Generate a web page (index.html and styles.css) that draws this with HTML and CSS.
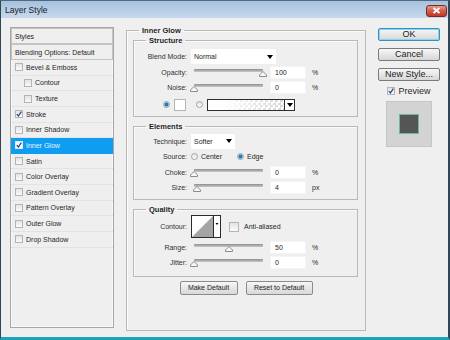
FILE: index.html
```html
<!doctype html>
<html lang="en">
  <head>
    <meta charset="UTF-8" />
    <meta name="viewport" content="width=device-width, initial-scale=1.0" />
    <title>Layer Style</title>
    <link rel="stylesheet" href="styles.css">
  </head>
  <body>
    <div class="window">
      <div class="titlebar">
        <span>Layer Style</span>
        <button type="button" class="close">
          <svg width="9" height="7" viewBox="0 0 9 7"><path d="M1.5 1 L7.5 6 M7.5 1 L1.5 6" stroke="#fff" stroke-width="1.8" /></svg>
        </button>
      </div>

      <div class="dialog">
        <!-- styles list -->
        <div class="styles">
          <div class="head">Styles</div>
          <div class="head">Blending Options: Default</div>
          <div class="item"><span class="cb"></span>Bevel &amp; Emboss</div>
          <div class="item indent"><span class="cb"></span>Contour</div>
          <div class="item indent"><span class="cb"></span>Texture</div>
          <div class="item"><span class="cb"><svg width="6" height="6" viewBox="0 0 6 6"><path d="M0.8 3.2 L2.4 5 L5.3 0.6" fill="none" stroke="#23427e" stroke-width="1.2" /></svg></span>Stroke</div>
          <div class="item"><span class="cb"></span>Inner Shadow</div>
          <div class="item selected"><span class="cb"><svg width="6" height="6" viewBox="0 0 6 6"><path d="M0.8 3.2 L2.4 5 L5.3 0.6" fill="none" stroke="#23427e" stroke-width="1.2" /></svg></span>Inner Glow</div>
          <div class="item"><span class="cb"></span>Satin</div>
          <div class="item"><span class="cb"></span>Color Overlay</div>
          <div class="item"><span class="cb"></span>Gradient Overlay</div>
          <div class="item"><span class="cb"></span>Pattern Overlay</div>
          <div class="item"><span class="cb"></span>Outer Glow</div>
          <div class="item"><span class="cb"></span>Drop Shadow</div>
        </div>

        <!-- settings -->
        <div class="main">
          <fieldset class="group">
            <legend>Inner Glow</legend>

            <fieldset class="sub structure">
              <legend>Structure</legend>
              <div class="row">
                <span class="lbl">Blend Mode:</span>
                <div class="select wide">Normal<span class="tri"></span></div>
              </div>
              <div class="row">
                <span class="lbl">Opacity:</span>
                <div class="slider"><div class="track"></div><svg class="thumb" style="left: 68px" width="8" height="6" viewBox="0 0 8 6"><path d="M0.5 5.5 L0.5 4 L4 0.5 L7.5 4 L7.5 5.5 Z" fill="#f7f7f7" stroke="#8c8c8c" /></svg></div>
                <div class="field">100</div><span class="unit">%</span>
              </div>
              <div class="row">
                <span class="lbl">Noise:</span>
                <div class="slider"><div class="track"></div><svg class="thumb" style="left: -1px" width="8" height="6" viewBox="0 0 8 6"><path d="M0.5 5.5 L0.5 4 L4 0.5 L7.5 4 L7.5 5.5 Z" fill="#f7f7f7" stroke="#8c8c8c" /></svg></div>
                <div class="field">0</div><span class="unit">%</span>
              </div>
              <div class="row color-row">
                <span class="radio on"></span>
                <span class="swatch"></span>
                <span class="radio"></span>
                <div class="gradient"><span class="arrow"><span class="tri"></span></span></div>
              </div>
            </fieldset>

            <fieldset class="sub elements">
              <legend>Elements</legend>
              <div class="row">
                <span class="lbl">Technique:</span>
                <div class="select narrow">Softer<span class="tri"></span></div>
              </div>
              <div class="row">
                <span class="lbl">Source:</span>
                <span class="radio"></span><span class="opt">Center</span>
                <span class="radio on"></span><span class="opt">Edge</span>
              </div>
              <div class="row">
                <span class="lbl">Choke:</span>
                <div class="slider"><div class="track"></div><svg class="thumb" style="left: -1px" width="8" height="6" viewBox="0 0 8 6"><path d="M0.5 5.5 L0.5 4 L4 0.5 L7.5 4 L7.5 5.5 Z" fill="#f7f7f7" stroke="#8c8c8c" /></svg></div>
                <div class="field">0</div><span class="unit">%</span>
              </div>
              <div class="row">
                <span class="lbl">Size:</span>
                <div class="slider"><div class="track"></div><svg class="thumb" style="left: 1.8px" width="8" height="6" viewBox="0 0 8 6"><path d="M0.5 5.5 L0.5 4 L4 0.5 L7.5 4 L7.5 5.5 Z" fill="#f7f7f7" stroke="#8c8c8c" /></svg></div>
                <div class="field">4</div><span class="unit">px</span>
              </div>
            </fieldset>

            <fieldset class="sub quality">
              <legend>Quality</legend>
              <div class="row contour-row">
                <span class="lbl">Contour:</span>
                <svg class="contour" width="30" height="23" viewBox="0 0 30 23">
                  <rect x="0.5" y="0.5" width="29" height="22" fill="#fff" stroke="#2b2b2b" />
                  <path d="M1 22 L22 1 L22 22 Z" fill="#a4a4a4" />
                  <path d="M22.5 1 L22.5 22" stroke="#2b2b2b" />
                  <path d="M24.5 8 L27.5 8 L26 10 Z" fill="#000" />
                </svg>
                <span class="cb big"></span><span class="opt">Anti-aliased</span>
              </div>
              <div class="row range-row">
                <span class="lbl">Range:</span>
                <div class="slider"><div class="track"></div><svg class="thumb" style="left: 33.5px" width="8" height="6" viewBox="0 0 8 6"><path d="M0.5 5.5 L0.5 4 L4 0.5 L7.5 4 L7.5 5.5 Z" fill="#f7f7f7" stroke="#8c8c8c" /></svg></div>
                <div class="field">50</div><span class="unit">%</span>
              </div>
              <div class="row">
                <span class="lbl">Jitter:</span>
                <div class="slider"><div class="track"></div><svg class="thumb" style="left: -1px" width="8" height="6" viewBox="0 0 8 6"><path d="M0.5 5.5 L0.5 4 L4 0.5 L7.5 4 L7.5 5.5 Z" fill="#f7f7f7" stroke="#8c8c8c" /></svg></div>
                <div class="field">0</div><span class="unit">%</span>
              </div>
            </fieldset>

            <div class="defaults">
              <button type="button" class="small-btn make">Make Default</button>
              <button type="button" class="small-btn reset">Reset to Default</button>
            </div>
          </fieldset>
        </div>

        <!-- buttons and preview -->
        <div class="side">
          <button type="button" class="btn default">OK</button>
          <button type="button" class="btn">Cancel</button>
          <button type="button" class="btn">New Style...</button>
          <div class="preview-toggle">
            <span class="cb"><svg width="6" height="6" viewBox="0 0 6 6"><path d="M0.8 3.2 L2.4 5 L5.3 0.6" fill="none" stroke="#23427e" stroke-width="1.2" /></svg></span>Preview
          </div>
          <div class="preview"><div class="preview-swatch"></div></div>
        </div>
      </div>
    </div>
  </body>
</html>
```

FILE: styles.css
```css
* {
  box-sizing: border-box;
}
body {
  margin: 0;
  font-family: "Liberation Sans", Arial, sans-serif;
  font-size: 7px;
  color: #262626;
  background: #efefef;
}
.window {
  width: 450px;
  height: 340px;
  border-top: 1px solid #50687c;
  border-left: 1px solid #2e4656;
  border-right: 2px solid #2e4656;
  border-bottom: 3px solid #1ba2bc;
  background: #efefef;
  display: flex;
  flex-direction: column;
}
.titlebar {
  height: 17px;
  flex: none;
  background: linear-gradient(#a6c0de, #c6d9ed);
  display: flex;
  align-items: center;
  padding-left: 4px;
  font-size: 8.5px;
  color: #1a1a1a;
}
.close {
  margin-left: auto;
  margin-right: 1px;
  margin-top: 2px;
  width: 21px;
  height: 12px;
  padding: 0;
  border: 1px solid #7c2a20;
  border-radius: 3px;
  background: linear-gradient(#e8998b, #d45a48 50%, #c13a28);
  display: flex;
  align-items: center;
  justify-content: center;
}
.dialog {
  display: flex;
  padding: 8px 0 0 9px;
}

/* styles list */
.styles {
  width: 104px;
  height: 301px;
  margin-top: 1px;
  border: 1px solid #a7a7a7;
  box-shadow: inset 0 0 0 1px #f8f8f8;
  background: #efefef;
}
.head {
  height: 16px;
  border: 1px solid #c4c4c4;
  display: flex;
  align-items: center;
  padding-left: 3px;
  background: #efefef;
}
.item {
  height: 15.64px;
  display: flex;
  align-items: center;
  padding-left: 4px;
  border-bottom: 1px solid #e3e3e3;
}
.item.indent {
  padding-left: 13px;
}
.item.selected {
  background: #0f9df1;
  color: #e6f3ff;
  border-bottom-color: #0f9df1;
}
.cb {
  width: 8px;
  height: 8px;
  flex: none;
  margin-right: 3px;
  border: 1px solid #b4b4b4;
  background: linear-gradient(#e4e4e4, #fafafa);
  display: inline-flex;
  align-items: center;
  justify-content: center;
}
.selected .cb {
  border-color: #dde9f4;
  background: #f4f8fb;
}
.cb.big {
  width: 10px;
  height: 10px;
  margin-left: 8px;
  margin-right: 2px;
}

/* settings groups */
.main {
  width: 240px;
  margin-left: 12px;
}
fieldset {
  margin: 0;
  padding: 0;
  min-width: 0;
  border: 1px solid #b9b9b9;
  box-shadow: inset 1px 1px 0 #fafafa;
}
legend {
  margin-left: 12px;
  padding: 0 3px;
  font-size: 7.5px;
  font-weight: bold;
  line-height: 9px;
  color: #1e1e1e;
}
.group {
  height: 305px;
}
.sub {
  margin: 1px 7px 0 6px;
}
.structure {
  padding: 4px 0 5px;
}
.elements {
  margin-top: 5px;
  padding: 3px 0 3px;
}
.quality {
  margin-top: 5px;
  padding: 2px 0 5px;
}
.row {
  height: 15.5px;
  display: flex;
  align-items: center;
}
.lbl {
  width: 57px;
  flex: none;
  padding-right: 4px;
  text-align: right;
  color: #303030;
}
.select {
  height: 15px;
  background: #fff;
  display: flex;
  align-items: center;
  padding: 0 3px;
}
.select.wide {
  width: 85px;
}
.select.narrow {
  width: 44px;
}
.select .tri {
  margin-left: auto;
}
.tri {
  width: 0;
  height: 0;
  border-left: 3px solid transparent;
  border-right: 3px solid transparent;
  border-top: 4px solid #000;
}
.slider {
  position: relative;
  width: 76px;
  height: 13px;
  flex: none;
}
.track {
  margin: 3px 4px 0 3px;
  height: 3px;
  border-radius: 1px;
  background: linear-gradient(#8d8d8d, #c9c9c9);
}
.thumb {
  position: absolute;
  top: 5px;
}
.field {
  width: 36px;
  height: 13px;
  margin-left: 3px;
  padding-left: 4px;
  background: #fff;
  border: 1px solid #f4f4f4;
  display: flex;
  align-items: center;
}
.unit {
  margin-left: 6px;
}
.color-row {
  margin-top: 3px;
  height: 12px;
  padding-left: 29px;
}
.radio {
  width: 7px;
  height: 7px;
  flex: none;
  border-radius: 50%;
  border: 1px solid #a3a3a3;
  background: linear-gradient(#e2e2e2, #fbfbfb);
}
.radio.on {
  background: radial-gradient(circle, #1c7dc2 0 1.5px, #8ccbee 2.2px, #e8e8e8 3px);
}
.swatch {
  width: 12px;
  height: 12px;
  margin: 0 10px 0 4px;
  background: #fff;
  border: 1px solid #b5b5b5;
}
.gradient {
  width: 88px;
  height: 12px;
  margin-left: 4px;
  border: 1px solid #2e2e2e;
  display: flex;
  background: linear-gradient(to right, #fff 15%, rgba(255, 255, 255, 0) 85%),
    repeating-conic-gradient(#d8d8d8 0 25%, #fff 0 50%) 0 0 / 5px 5px;
}
.gradient .arrow {
  margin-left: auto;
  width: 10px;
  border-left: 1px solid #2e2e2e;
  background: #fff;
  display: flex;
  align-items: center;
  justify-content: center;
}
.opt {
  margin-left: 3px;
  margin-right: 15px;
}
.contour-row {
  height: 22px;
}
.contour {
  flex: none;
}
.range-row {
  margin-top: 2px;
}
.defaults {
  margin-top: 4px;
  display: flex;
  justify-content: center;
  gap: 8px;
}
.small-btn {
  height: 14px;
  padding: 0;
  font-family: inherit;
  font-size: 7px;
  color: #222;
  border: 1px solid #8a8a8a;
  border-radius: 2px;
  background: linear-gradient(#f7f7f7, #e6e6e6 50%, #d9d9d9);
}
.small-btn.make {
  width: 58px;
}
.small-btn.reset {
  width: 67px;
}

/* right column */
.side {
  width: 62px;
  margin-left: 12px;
  padding-top: 2px;
  display: flex;
  flex-direction: column;
  align-items: center;
}
.btn {
  width: 62px;
  height: 13px;
  margin-bottom: 7px;
  padding: 0;
  font-family: inherit;
  font-size: 9px;
  line-height: 11px;
  color: #1c1c1c;
  border: 1px solid #7a7a7a;
  border-radius: 2px;
  background: linear-gradient(#f7f7f7, #e7e7e7 50%, #d6d6d6);
}
.btn.default {
  border-color: #3a8fc2;
  box-shadow: inset 0 0 0 1px #86d6ee;
}
.preview-toggle {
  margin-top: -2px;
  height: 10px;
  display: flex;
  align-items: center;
  font-size: 9px;
  color: #2a2a2a;
}
.preview {
  margin-top: 5px;
  width: 46px;
  height: 46px;
  background: #d3d3d3;
  border: 1px solid #c6c6c6;
  display: flex;
  align-items: center;
  justify-content: center;
}
.preview-swatch {
  width: 20px;
  height: 20px;
  background: #555;
  border: 1px solid #69b8ad;
}
```
